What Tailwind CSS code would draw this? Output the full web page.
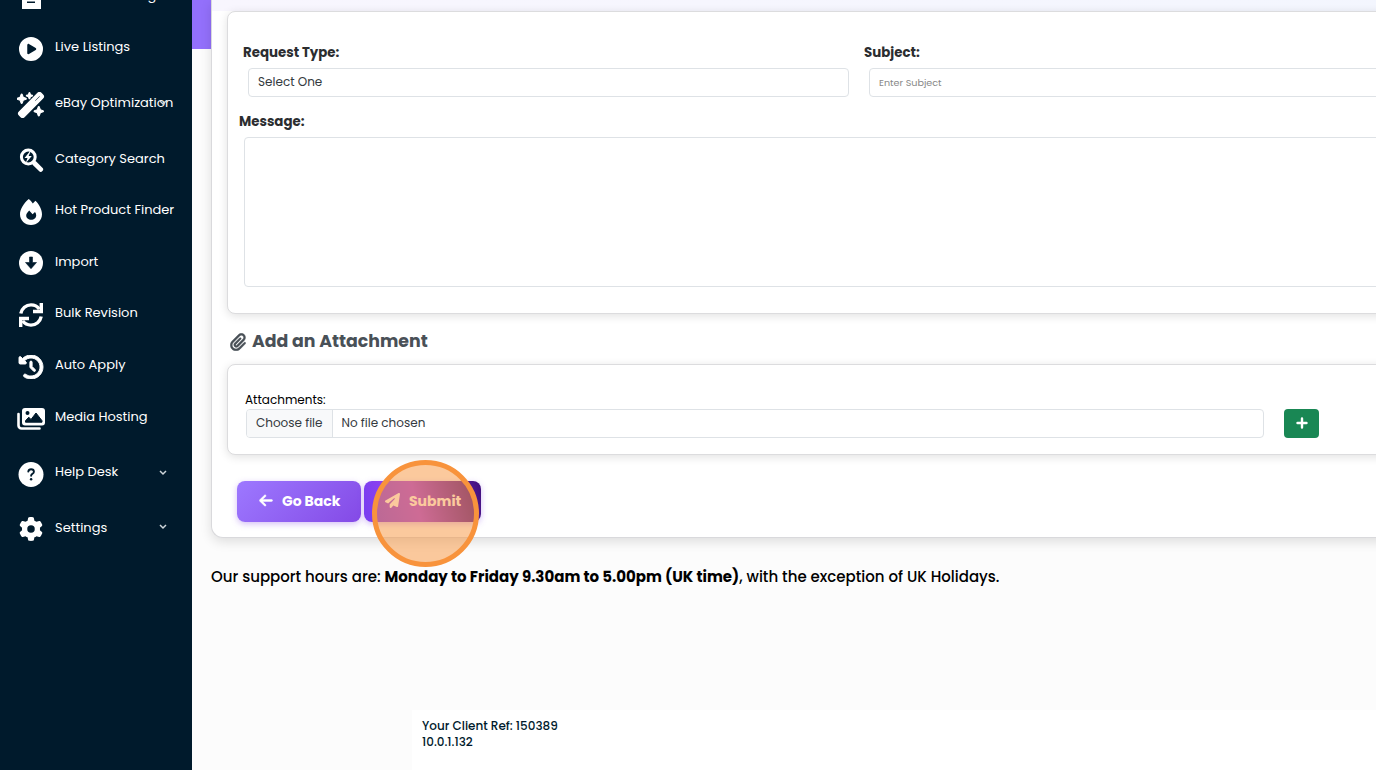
<!DOCTYPE html>
<html lang="en">
<head>
    <meta charset="UTF-8">
    <meta name="viewport" content="width=device-width, initial-scale=1.0">
    <title>Help Desk - New Request</title>
    <script src="https://cdn.jsdelivr.net/npm/@tailwindcss/browser@4"></script>
</head>
<body class="bg-[#fcfcfc] font-['Poppins','Inter',sans-serif] text-black">
    <div class="flex h-[770px] overflow-hidden">

        <!-- Sidebar -->
        <nav class="w-48 shrink-0 bg-[#001a2c] text-white text-[13px] overflow-hidden">
            <ul class="-mt-[29px] flex flex-col">
                <li class="flex h-[52px] items-center pl-[17px]">
                    <svg class="h-6 w-7" viewBox="0 0 28 24" fill="#fff"><path fill-rule="evenodd" d="M5 0h19v24H5zM10 16.500h8v1.500h-8z"/></svg>
                    <span class="ml-2.5 pb-0.5 whitespace-nowrap">Products Listing</span>
                </li>
                <li class="flex h-[52px] items-center pl-[17px]">
                    <svg class="h-6 w-7" viewBox="0 0 512 512" fill="#fff"><path d="M0 256a256 256 0 1 1 512 0A256 256 0 1 1 0 256zM188.300 147.100c-7.600 4.200-12.300 12.300-12.300 20.900V344c0 8.700 4.700 16.700 12.300 20.900s16.800 4.100 24.300-.5l144-88c7.100-4.400 11.500-12.100 11.500-20.500s-4.400-16.100-11.500-20.500l-144-88c-7.400-4.500-16.700-4.700-24.300-.5z"/></svg>
                    <span class="ml-2.5 pb-1 whitespace-nowrap">Live Listings</span>
                </li>
                <li class="relative flex h-[59px] items-center pl-[17px]">
                    <svg class="h-[26px] w-7" viewBox="0 0 576 512" fill="#fff" stroke="#fff" stroke-width="22"><path d="M234.700 42.700L197 56.800c-3 1.100-5 4-5 7.200s2 6.100 5 7.200l37.700 14.100L248.800 123c1.100 3 4 5 7.200 5s6.100-2 7.200-5l14.100-37.700L315 71.200c3-1.100 5-4 5-7.200s-2-6.100-5-7.200L277.300 42.700 263.200 5c-1.100-3-4-5-7.200-5s-6.100 2-7.200 5L234.700 42.700zM46.100 395.400c-18.700 18.700-18.700 49.100 0 67.900l34.600 34.600c18.700 18.700 49.100 18.700 67.900 0L529.900 116.500c18.700-18.700 18.700-49.100 0-67.900L495.300 14.100c-18.700-18.700-49.100-18.700-67.900 0L46.100 395.400zM484.600 82.600l-105 105-23.300-23.300 105-105 23.300 23.300zM7.500 117.200C3 118.900 0 123.200 0 128s3 9.100 7.500 10.800L64 160l21.200 56.500c1.700 4.500 6 7.500 10.800 7.500s9.100-3 10.800-7.500L128 160l56.500-21.200c4.500-1.700 7.500-6 7.500-10.800s-3-9.100-7.500-10.800L128 96 106.800 39.500C105.100 35 100.800 32 96 32s-9.100 3-10.800 7.500L64 96 7.500 117.200zm352 256c-4.500 1.700-7.500 6-7.500 10.800s3 9.100 7.500 10.800L416 416l21.200 56.500c1.700 4.500 6 7.500 10.800 7.500s9.100-3 10.800-7.500L480 416l56.500-21.200c4.500-1.700 7.500-6 7.500-10.800s-3-9.100-7.500-10.800L480 352l-21.200-56.500c-1.700-4.500-6-7.500-10.800-7.500s-9.100 3-10.800 7.500L416 352l-56.500 21.200z"/></svg>
                    <span class="ml-2.5 pb-[3px] whitespace-nowrap">eBay Optimization</span>
                    <svg class="absolute left-[159px] top-[24px] h-[7px] w-2" viewBox="0 0 8 7" fill="none" stroke="#cdd5da" stroke-width="1.500"><path d="M1 2l3 3 3-3"/></svg>
                </li>
                <li class="flex h-[52px] items-center pl-[17px]">
                    <svg class="h-6 w-7" viewBox="0 0 28 24" fill="none" stroke="#fff"><circle cx="11.300" cy="9" r="6.900" stroke-width="3"/><path d="M17.500 15.200l6.200 6.200" stroke-width="4.800" stroke-linecap="round"/><path fill="#fff" stroke="none" d="M12.800 3.500L7.500 10h3l-1.700 5 6-7h-3.200l2-4.500z"/></svg>
                    <span class="ml-2.5 pb-0.5 whitespace-nowrap">Category Search</span>
                </li>
                <li class="flex h-[51px] items-center pl-[17px]">
                    <svg class="h-[26px] w-7" viewBox="0 0 28 26" fill="#fff"><path fill-rule="evenodd" d="M11.800 0c1.600 1.300 2.800 2.700 4 4.400l2.600-2.600C22 5.200 25 10.500 25 15.200 25 21.300 20.100 26 14 26S3 21.300 3 15.200C3 10 7 4 11.800 0zM14.200 20.800c2.900 0 5-1.900 5-4.600 0-1.200-.5-2.300-1.200-3.300l-2.400 2.300-3.400-3.700c-2 2-3 3.400-3 5 0 2.600 2.200 4.300 5 4.300z"/></svg>
                    <span class="ml-2.5 pb-1 whitespace-nowrap">Hot Product Finder</span>
                </li>
                <li class="flex h-[52px] items-center pl-[17px]">
                    <svg class="h-6 w-7" viewBox="0 0 24 24"><circle cx="12" cy="12" r="12" fill="#fff"/><path fill="#001a2c" d="M10.500 6h3v5.500h4L12 17.700l-5.500-6.200h4z" stroke="#001a2c" stroke-width=".6" stroke-linejoin="round"/></svg>
                    <span class="ml-2.5 pb-0.5 whitespace-nowrap">Import</span>
                </li>
                <li class="flex h-[52px] items-center pl-[17px]">
                    <svg class="h-6 w-7" viewBox="0 0 24 24" fill="none" stroke="#fff" stroke-width="3.400"><path d="M1.800 10.500C2.800 5.400 7 1.900 12 1.900c3.600 0 6.500 1.600 8.300 4.200M22.200 13.500c-1 5.100-5.200 8.600-10.200 8.600-3.600 0-6.500-1.600-8.300-4.200"/><path d="M22.300 0v8.500H14M1.700 24v-8.500H10"/></svg>
                    <span class="ml-2.5 pb-1 whitespace-nowrap">Bulk Revision</span>
                </li>
                <li class="flex h-[52px] items-center pl-[17px]">
                    <svg class="h-6 w-7" viewBox="0 0 512 512" fill="#fff" stroke="#fff" stroke-width="20"><path d="M75 75L41 41C25.900 25.900 0 36.600 0 57.900V168c0 13.300 10.700 24 24 24H134.100c21.400 0 32.100-25.900 17-41l-30.800-30.800C155 85.500 203 64 256 64c106 0 192 86 192 192s-86 192-192 192c-40.800 0-78.600-12.700-109.700-34.400c-14.500-10.100-34.400-6.600-44.600 7.900s-6.600 34.400 7.900 44.600C151.200 495 201.700 512 256 512c141.400 0 256-114.600 256-256S397.400 0 256 0C185.300 0 121.300 28.700 75 75zm181 53c-13.300 0-24 10.700-24 24V256c0 6.400 2.500 12.500 7 17l72 72c9.400 9.400 24.600 9.400 33.900 0s9.400-24.600 0-33.900l-65-65V152c0-13.300-10.700-24-24-24z"/></svg>
                    <span class="ml-2.5 pb-1 whitespace-nowrap">Auto Apply</span>
                </li>
                <li class="flex h-[51px] items-center pl-[17px]">
                    <svg class="h-[22px] w-7" viewBox="0 0 28 22"><path fill="none" stroke="#fff" stroke-width="2.600" stroke-linecap="round" d="M1.500 6v11.500a3 3 0 0 0 3 3h18"/><rect x="5" width="23" height="17.500" rx="3" fill="#fff"/><circle cx="10.500" cy="5" r="2" fill="#001a2c"/><path fill="#001a2c" stroke="#001a2c" stroke-linejoin="round" d="M8.500 14.200v-1.500l3.300-3.500 2.200 2.300 5-6.500 6 7.700v1.500z"/></svg>
                    <span class="ml-2.5 pb-1 whitespace-nowrap">Media Hosting</span>
                </li>
                <li class="flex h-[60px] items-center pl-[17px]">
                    <svg class="h-[25px] w-7" viewBox="0 0 24 24"><circle cx="12" cy="12" r="12" fill="#fff"/><path fill="none" stroke="#001a2c" stroke-width="1.800" stroke-linecap="round" d="M9.400 9.200c.2-1.500 1.300-2.300 2.700-2.300 1.600 0 2.700 1 2.700 2.400 0 1.900-2.700 2.200-2.700 3.900"/><circle cx="12.100" cy="16.500" r="1.200" fill="#001a2c"/></svg>
                    <span class="ml-2.5 w-[104px] pb-1 whitespace-nowrap">Help Desk</span>
                    <svg class="mb-1 h-[7px] w-2" viewBox="0 0 8 7" fill="none" stroke="#cdd5da" stroke-width="1.500"><path d="M1 2l3 3 3-3"/></svg>
                </li>
                <li class="flex h-[50px] items-center pl-[17px]">
                    <svg class="h-6 w-7" viewBox="0 0 512 512" fill="#fff"><path d="M495.900 166.600c3.200 8.700 .5 18.400-6.400 24.600l-43.300 39.400c1.100 8.300 1.700 16.800 1.700 25.400s-.6 17.100-1.700 25.400l43.300 39.400c6.900 6.200 9.600 15.900 6.400 24.600c-4.400 11.900-9.700 23.300-15.800 34.300l-4.700 8.100c-6.600 11-14 21.400-22.100 31.200c-5.900 7.200-15.700 9.600-24.500 6.800l-55.700-17.700c-13.400 10.300-28.200 18.900-44 25.400l-12.500 57.100c-2 9.100-9 16.300-18.200 17.800c-13.800 2.300-28 3.500-42.500 3.500s-28.700-1.200-42.500-3.500c-9.200-1.500-16.200-8.700-18.200-17.800l-12.500-57.100c-15.800-6.500-30.600-15.100-44-25.400L83.100 425.900c-8.800 2.800-18.600 .3-24.500-6.800c-8.100-9.800-15.500-20.200-22.100-31.200l-4.700-8.100c-6.100-11-11.400-22.400-15.800-34.300c-3.200-8.700-.5-18.400 6.400-24.600l43.300-39.400C64.600 273.100 64 264.600 64 256s.6-17.100 1.700-25.400L22.400 191.200c-6.900-6.200-9.600-15.900-6.400-24.600c4.400-11.900 9.700-23.300 15.800-34.300l4.700-8.100c6.600-11 14-21.400 22.100-31.200c5.900-7.200 15.700-9.600 24.500-6.800l55.700 17.700c13.400-10.300 28.200-18.900 44-25.400l12.500-57.100c2-9.100 9-16.300 18.200-17.800C227.300 1.200 241.500 0 256 0s28.700 1.200 42.500 3.500c9.200 1.500 16.200 8.700 18.200 17.800l12.500 57.100c15.800 6.500 30.600 15.100 44 25.400l55.700-17.700c8.800-2.800 18.600-.3 24.500 6.800c8.100 9.800 15.500 20.200 22.100 31.200l4.700 8.100c6.100 11 11.400 22.400 15.800 34.300zM256 336a80 80 0 1 0 0-160 80 80 0 1 0 0 160z"/></svg>
                    <span class="ml-2.5 w-[104px] pb-0.5 whitespace-nowrap">Settings</span>
                    <svg class="mb-1.5 h-[7px] w-2" viewBox="0 0 8 7" fill="none" stroke="#cdd5da" stroke-width="1.500"><path d="M1 2l3 3 3-3"/></svg>
                </li>
            </ul>
        </nav>

        <!-- Banner edge beside the card -->
        <div class="h-[49px] w-[19px] shrink-0 bg-[#9370fb]"></div>

        <main class="w-[1250px] shrink-0">
            <!-- Request card -->
            <div class="h-[538px] rounded-bl-xl border-b border-l border-[#d9d9dc] bg-white shadow-[0_4px_12px_rgba(0,0,0,0.12)]">
                <div class="h-[11px] bg-linear-to-r from-[#f8f6fe] to-[#f3f6fe]"></div>
                <div class="pl-[15px]">
                    <section class="h-[303px] rounded-lg border border-[#dcdcde] bg-white pl-[11px] pt-[31px] shadow-[0_2px_10px_rgba(0,0,0,0.12)]">
                        <div class="flex">
                            <div class="w-[621px] shrink-0 pl-1">
                                <label class="block h-5 text-[13.35px] font-bold leading-5 text-[#2b2d30]">Request Type:</label>
                                <div class="ml-[5px] mt-[5px] h-[29px] w-[601px] rounded border border-[#dee2e6] pl-[9px] text-[12px] leading-[26px] text-[#343a40]">Select One</div>
                            </div>
                            <div class="w-[621px] shrink-0 pl-1">
                                <label class="block h-5 text-[13.35px] font-bold leading-5 text-[#2b2d30]">Subject:</label>
                                <div class="ml-[5px] mt-[5px] h-[29px] w-[601px] rounded border border-[#dee2e6] pl-[9px] text-[9.6px] leading-[28px] text-[#888888]">Enter Subject</div>
                            </div>
                        </div>
                        <label class="mt-[15px] block h-5 text-[13.35px] font-bold leading-5 text-[#2b2d30]">Message:</label>
                        <div class="ml-[5px] mt-[5px] h-[150px] w-[1220px] rounded border border-[#dee2e6]"></div>
                    </section>

                    <h2 class="flex h-[50px] items-center pb-px pt-1.5 text-[17.35px] font-bold text-[#495057]">
                        <svg class="ml-[3px] h-[18px] w-4" viewBox="0 0 448 512" fill="#495057" stroke="#495057" stroke-width="10"><path d="M364.200 83.800c-24.400-24.400-64-24.400-88.400 0l-184 184c-42.100 42.100-42.100 110.300 0 152.400s110.300 42.100 152.400 0l152-152c10.900-10.900 28.700-10.900 39.600 0s10.900 28.700 0 39.600l-152 152c-64 64-167.600 64-231.600 0s-64-167.600 0-231.600l184-184c46.300-46.300 121.300-46.300 167.600 0s46.300 121.300 0 167.600l-176 176c-28.600 28.600-75 28.600-103.600 0s-28.600-75 0-103.600l144-144c10.900-10.900 28.700-10.900 39.600 0s10.900 28.700 0 39.600l-144 144c-6.700 6.700-6.700 17.700 0 24.400s17.700 6.700 24.400 0l176-176c24.400-24.400 24.400-64 0-88.400z"/></svg>
                        <span class="ml-1.5">Add an Attachment</span>
                    </h2>

                    <section class="h-[91px] rounded-lg border border-[#dcdcde] bg-white pl-[17px] pt-[26px] shadow-[0_2px_10px_rgba(0,0,0,0.12)]">
                        <div class="h-[18px] text-[12px] leading-[18px]">Attachments:</div>
                        <div class="ml-px flex">
                            <div class="flex h-[29px] w-[1018px] overflow-hidden rounded border border-[#dee2e6] text-[12px] leading-[26px] text-[#343a40]">
                                <div class="w-[86px] border-r border-[#dee2e6] bg-[#f8f9fa] pl-[9px]">Choose file</div>
                                <div class="pl-[8.5px]">No file chosen</div>
                            </div>
                            <button class="ml-5 flex h-[29px] w-[35px] items-center justify-center rounded bg-[#198754]">
                                <svg class="mb-0.5 size-3" viewBox="0 0 12 12" stroke="#fff" stroke-width="2.400" stroke-linecap="round"><path d="M6 1.500v9M1.500 6h9"/></svg>
                            </button>
                        </div>
                    </section>

                    <div class="relative mt-[26px] flex gap-[3px] pl-2.5 text-sm font-bold text-white">
                        <button class="flex h-[41px] w-[124px] items-center rounded-lg bg-linear-135 from-[#9d78ff] to-[#8449e6] pb-0.5 pl-[22px] shadow-[0_2px_6px_rgba(132,73,230,0.35)]">
                            <svg class="h-[15px] w-3.5" viewBox="0 0 448 512" fill="#fff" stroke="#fff" stroke-width="16"><path d="M9.400 233.400c-12.500 12.500-12.500 32.800 0 45.300l160 160c12.500 12.500 32.800 12.500 45.300 0s12.500-32.800 0-45.300L109.200 288 416 288c17.700 0 32-14.300 32-32s-14.300-32-32-32l-306.700 0L214.600 118.600c12.500-12.500 12.500-32.800 0-45.300s-32.800-12.500-45.300 0l-160 160z"/></svg>
                            <span class="ml-[9px]">Go Back</span>
                        </button>
                        <button class="flex h-[41px] w-[117px] items-center rounded-lg bg-linear-75 from-[#7a3df0] from-5% via-[#a443ee] via-45% to-[#3f0f7c] to-100% pb-0.5 pl-[21px] shadow-[0_2px_6px_rgba(132,73,230,0.35)]">
                            <svg class="size-[15px]" viewBox="0 0 512 512" fill="#fff"><path d="M498.100 5.600c10.100 7 15.400 19.100 13.500 31.200l-64 416c-1.500 9.700-7.400 18.200-16 23s-18.900 5.400-28 1.600L284 427.700l-68.500 74.100c-8.900 9.700-22.900 12.900-35.200 8.100S160 493.200 160 480V396.400c0-4 1.500-7.800 4.200-10.700L331.800 202.800c5.800-6.300 5.600-16-.4-22s-15.700-6.400-22-.7L106 360.800 17.700 316.600C7.100 311.300 .3 300.700 0 288.900s5.900-22.800 16.100-28.700l448-256c10.700-6.100 23.900-5.500 34 1.400z"/></svg>
                            <span class="ml-[9px]">Submit</span>
                        </button>
                        <!-- Click marker -->
                        <div class="absolute left-[145px] top-[-21px] size-[107px] rounded-full border-[5px] border-[#f8933c] bg-[#f8933c]/50"></div>
                    </div>
                </div>
            </div>

            <p class="mt-[27px] h-6 whitespace-nowrap text-[15px] font-medium leading-6">Our support hours are: <b class="font-bold">Monday to Friday 9.30am to 5.00pm (UK time)</b>, with the exception of UK Holidays.</p>

            <footer class="ml-[201px] mt-[121px] h-[60px] bg-white pl-2.5 pt-2 text-[12px] font-medium leading-4 text-[#001a2c]">
                <div>Your Client Ref: 150389</div>
                <div>10.0.1.132</div>
            </footer>
        </main>
    </div>
</body>
</html>
